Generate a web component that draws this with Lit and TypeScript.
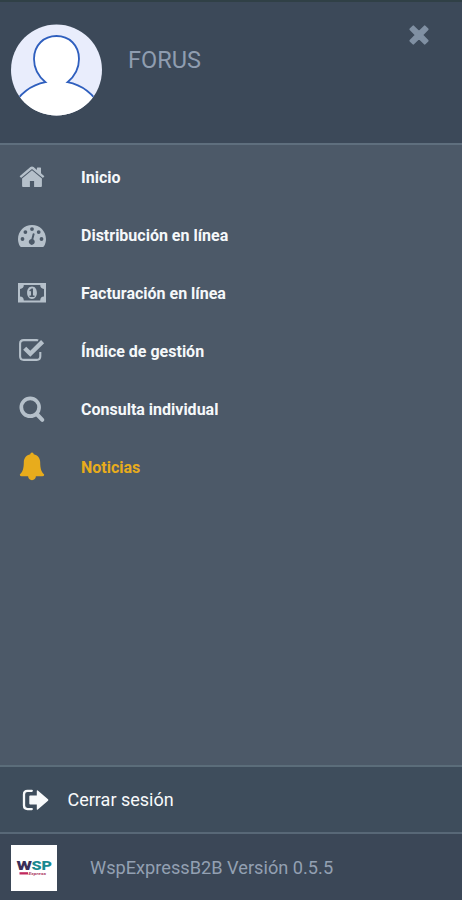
import { LitElement, html, svg, css, SVGTemplateResult } from "lit";
import { customElement } from "lit/decorators.js";
import { classMap } from "lit/directives/class-map.js";

interface Item {
  label: string;
  icon: SVGTemplateResult;
  active?: boolean;
}

const home = svg`
  <path d="M14 6.300 4.100 14.500v7.600q0 .9.900.9H11.900v-6.100h4.200V23H23q.9 0 .9-.9V14.500z"/>
  <path d="M14 2.500q.9 0 1.600.6L18.900 5.900V4q0-.6.6-.6h2.900q.6 0 .6.600v5.300l3.100 2.600q.4.300.1.700l-.9 1q-.3.400-.7.100L14 5 3.400 13.700q-.4.300-.7-.1l-.9-1q-.3-.4.1-.7L12.400 3.100q.7-.6 1.600-.6z"/>`;

const gauge = svg`
  <path fill-rule="evenodd" d="M14 3C6.200 3 0 9.200 0 17c0 2.700.7 5.200 2 7.300q.4.700 1.200.7h21.600q.8 0 1.200-.7c1.300-2.100 2-4.600 2-7.300C28 9.200 21.800 3 14 3zM4.500 15.100a1.900 1.900 0 1 1 0 3.800 1.900 1.900 0 0 1 0-3.800zM7.400 8.200a1.900 1.900 0 1 1 0 3.800 1.900 1.900 0 0 1 0-3.800zM14 5.200a1.900 1.900 0 1 1 0 3.800 1.900 1.900 0 0 1 0-3.800zM20.700 8.200a1.900 1.900 0 1 1 0 3.800 1.900 1.900 0 0 1 0-3.800zM23.500 15.100a1.900 1.900 0 1 1 0 3.800 1.900 1.900 0 0 1 0-3.800zM15.800 11.200q1 .3.8 1.100L15.300 17.300a3 3 0 1 1-1.900-.4l1.300-5.100q.3-.8 1.100-.6z"/>`;

const money = svg`
  <path fill-rule="evenodd" d="M0 3h28v19.500H0zM5.800 5A4 4 0 0 1 2 8.900v7.700a4 4 0 0 1 3.800 3.900h16.400A4 4 0 0 1 26 16.600V8.900A4 4 0 0 1 22.200 5z"/>
  <path fill-rule="evenodd" d="M14 6.500c3.300 0 4.900 3 4.900 6.200s-1.600 6.200-4.900 6.200-4.900-3-4.900-6.200 1.600-6.200 4.900-6.200zm-.5 2-2.300 1.900.9 1.100.9-.7v4.600h-1.500v1.500h5v-1.500H15V8.500z"/>`;

const check = svg`
  <path class="line" stroke-width="2.100" d="M22.300 14v4.300q0 3.600-3.600 3.600H5.700q-3.600 0-3.600-3.600V5.700q0-3.600 3.600-3.600h13q.8 0 1.500.3"/>
  <path class="line" stroke-width="4.400" d="M6.700 10.200 12.300 15.700 24.600 3.600"/>`;

const search = svg`
  <circle class="line" cx="12.200" cy="11.300" r="8.900" stroke-width="3.700"/>
  <path class="line round" stroke-width="4" d="M18.700 18 24.300 23.800"/>`;

const bell = svg`
  <path d="M14-1.600q1.700 0 1.700 1.900c4 .8 6.500 4 6.500 8 0 6.600 1.300 9.700 4 12.100q-.1 1.900-1.900 1.900h-6.400c0 2.200-1.700 3.900-3.900 3.900s-3.900-1.700-3.900-3.900H3.700q-1.800 0-1.900-1.900c2.700-2.400 4-5.500 4-12.100 0-4 2.500-7.200 6.500-8q0-1.900 1.700-1.900z"/>`;

const items: Item[] = [
  { label: "Inicio", icon: home },
  { label: "Distribución en línea", icon: gauge },
  { label: "Facturación en línea", icon: money },
  { label: "Índice de gestión", icon: check },
  { label: "Consulta individual", icon: search },
  { label: "Noticias", icon: bell, active: true },
];

@customElement("app-root")
export class AppRoot extends LitElement {
  static styles = css`
    :host {
      display: flex;
      flex-direction: column;
      height: 900px;
      box-sizing: border-box;
      border-top: 2px solid #304046;
      background: #4c5968;
      font-family: Roboto, "Liberation Sans", sans-serif;
    }
    svg {
      display: block;
      overflow: visible;
      flex: none;
    }
    .line {
      fill: none;
      stroke: currentColor;
    }
    .round {
      stroke-linecap: round;
    }
    .head {
      display: flex;
      align-items: flex-start;
      height: 141px;
      border-bottom: 2px solid #5f6f7e;
      background: #3c4959;
    }
    .avatar {
      margin: 22px 0 0 11px;
    }
    .name {
      flex: 1;
      margin: 44px 0 0 25px;
      font-size: 23.500px;
      line-height: 28px;
      color: #8f9db0;
    }
    .close {
      margin: 23px 33px 0 0;
      color: #8090a3;
    }
    .cross {
      fill: currentColor;
      stroke: currentColor;
      stroke-width: 2;
      stroke-linejoin: round;
    }
    .menu {
      flex: 1;
      padding-top: 4px;
    }
    .item {
      display: flex;
      align-items: center;
      height: 58px;
      padding-left: 18px;
      gap: 35px;
      color: #b5c0ca;
      fill: currentColor;
    }
    .label {
      padding-bottom: 2px;
      font-size: 16px;
      font-weight: 700;
      color: #f5f8fa;
    }
    .item.active,
    .item.active .label {
      color: #e8ac1c;
    }
    .logout {
      display: flex;
      align-items: center;
      height: 65px;
      padding-left: 22px;
      gap: 18.500px;
      border-top: 2px solid #5b6d7a;
      background: #3e4d5c;
      color: #f8fafb;
      font-size: 18px;
    }
    .foot {
      display: flex;
      align-items: center;
      height: 66px;
      padding-left: 11px;
      gap: 33px;
      border-top: 2px solid #586877;
      background: #3b4757;
      color: #93a0b2;
      font-size: 18.200px;
    }
    .brand {
      margin-top: 2px;
    }
    .wsp {
      font-family: Roboto, sans-serif;
      font-weight: 900;
      font-size: 12.500px;
    }
    .tiny {
      font-family: Roboto, sans-serif;
      font-style: italic;
      font-weight: 700;
      font-size: 3.600px;
    }
  `;

  render() {
    return html`
      <header class="head">
        <svg class="avatar" width="92" height="92" viewBox="0 0 92 92">
          <defs><clipPath id="disc"><circle cx="45.500" cy="46" r="45.500" /></clipPath></defs>
          <circle cx="45.500" cy="46" r="45.500" fill="#e9edfc" />
          <path clip-path="url(#disc)" fill="#fff" stroke="#2f5fbe" stroke-width="1.800"
            d="M2 83C8 70 20 61 34.500 58.200C27 52 23 44 23 35C23 21 33 12 45.500 12S68 21 68 35C68 44 64 52 56.500 58.200C71 61 83 70 89 83V100H2Z" />
        </svg>
        <div class="name">FORUS</div>
        <svg class="close" width="20" height="20" viewBox="0 0 20 20">
          <path class="cross"
            d="M4.300 1.400 10 7 15.700 1.400 18.600 4.300 13 10 18.600 15.700 15.700 18.600 10 13 4.300 18.600 1.400 15.700 7 10 1.400 4.300Z" />
        </svg>
      </header>
      <nav class="menu">
        ${items.map(
          (i) => html`<div class=${classMap({ item: true, active: !!i.active })}>
            <svg width="28" height="28" viewBox="0 0 28 28">${i.icon}</svg>
            <span class="label">${i.label}</span>
          </div>`
        )}
      </nav>
      <div class="logout">
        <svg width="27" height="22" viewBox="0 0 27 22">
          <path class="line round" stroke-width="2.300" d="M9.800 1.800H5.500Q2 1.800 2 5.300V16.600Q2 20.100 5.500 20.100H9.800" />
          <path fill="currentColor" d="M8.200 6.400h6.600V2q0-1.400 1-.5l10.200 8.700q.8.800 0 1.600L15.800 20.500q-1 .9-1-.5v-4.500H8.200q-.9 0-.9-.9V7.300q0-.9.900-.9z" />
        </svg>
        <span>Cerrar sesión</span>
      </div>
      <footer class="foot">
        <svg class="brand" width="46" height="46" viewBox="0 0 46 46">
          <rect width="46" height="46" fill="#fff" />
          <text class="wsp" x="5.500" y="24.500" textLength="15.500" lengthAdjust="spacingAndGlyphs" fill="#3b2e58">W</text>
          <text class="wsp" x="20.500" y="24.500" textLength="20.500" lengthAdjust="spacingAndGlyphs" fill="#198a91">SP</text>
          <rect x="8.500" y="27.200" width="8.500" height="2.300" fill="#c1285d" />
          <text class="tiny" x="17.500" y="30.200" textLength="17.500" lengthAdjust="spacingAndGlyphs" fill="#b0446c">Express</text>
        </svg>
        <span>WspExpressB2B Versión 0.5.5</span>
      </footer>
    `;
  }
}
